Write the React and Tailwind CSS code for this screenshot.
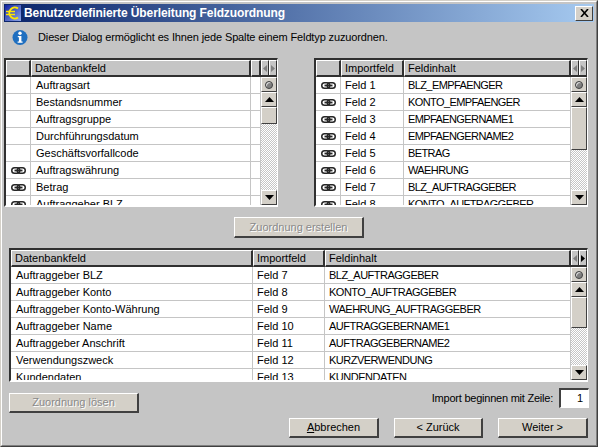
function Link() {
  return (
    <svg width="15" height="7" viewBox="0 0 15 7" fill="none" stroke="#262626" strokeWidth="1.5">
      <rect x="0.75" y="0.75" width="8" height="5.5" rx="2.75" />
      <rect x="6.25" y="0.75" width="8" height="5.5" rx="2.75" />
      <path d="M3.5 3.5h8" strokeWidth="1.8" />
    </svg>
  );
}

function Button({ w, h, disabled, children }) {
  return (
    <div className={"flex items-center justify-center bg-[#d4d0c8] border-t border-l border-t-white border-l-white border-r-2 border-b-2 border-r-[#404040] border-b-[#404040] shrink-0 " + w + " " + h + " " + (disabled ? "text-[#8a8a8a] [text-shadow:1px_1px_0_#fff]" : "text-black")}>
      {children}
    </div>
  );
}

function Tri({ dir, color = "#000" }) {
  const pts = { up: "0,5 9,5 4.5,0", down: "0,0 9,0 4.5,5", left: "5,0 5,7 1,3.5", right: "1,0 1,7 5,3.5" }[dir];
  const big = dir === "up" || dir === "down";
  return (
    <svg width={big ? 9 : 6} height={big ? 5 : 7} viewBox={big ? "0 0 9 5" : "0 0 6 7"}>
      <polygon points={pts} fill={color} />
    </svg>
  );
}

function HeadCell({ className = "", children }) {
  return (
    <div className={"h-[17px] flex items-center pl-[3px] bg-[#c5c5c5] border-t border-l border-t-white border-l-white border-r-2 border-b-2 border-r-[#303030] border-b-[#303030] overflow-hidden whitespace-nowrap shrink-0 " + className}>
      {children}
    </div>
  );
}

function Cell({ className = "", children }) {
  return (
    <div className={"h-full flex items-center border-r border-r-[#c5c5c5] overflow-hidden whitespace-nowrap shrink-0 " + className}>
      {children}
    </div>
  );
}

function ScrollBtn({ className = "", children }) {
  return (
    <div className={"w-[16px] flex items-center justify-center bg-[#d4d0c8] border-t border-l border-t-white border-l-white border-r border-b border-r-[#404040] border-b-[#404040] shrink-0 " + className}>
      {children}
    </div>
  );
}

function Scrollbar({ thumb, rightDark }) {
  return (
    <div className="w-[16px] shrink-0 flex flex-col h-full">
      <div className="h-[17px] flex shrink-0 bg-[#c5c5c5] border-b-2 border-b-[#303030]">
        <div className="w-[8px] flex items-center justify-center bg-[#c5c5c5] border-t border-l border-t-white border-l-white border-r border-r-[#303030]"><Tri dir="left" color="#808080" /></div>
        <div className="w-[8px] flex items-center justify-center bg-[#c5c5c5] border-t border-l border-t-white border-l-white border-r border-r-[#303030]"><Tri dir="right" color={rightDark ? "#000" : "#808080"} /></div>
      </div>
      <ScrollBtn className="h-[15px]">
        <div className="w-[8px] h-[8px] rounded-full bg-[#808080] border border-[#404040] shadow-[inset_1px_1px_0_#e8e8e8]" />
      </ScrollBtn>
      <ScrollBtn className="h-[15px]"><Tri dir="up" /></ScrollBtn>
      <ScrollBtn className={thumb} />
      <div className="flex-1 bg-[repeating-conic-gradient(#ffffff_0_25%,#c5c5c5_0_50%)] bg-[length:2px_2px]" />
      <ScrollBtn className="h-[15px]"><Tri dir="down" /></ScrollBtn>
    </div>
  );
}

function Grid({ className, headers, rows, thumb, rightDark }) {
  return (
    <div className={"border-t-2 border-l-2 border-t-[#303030] border-l-[#303030] border-r border-b-2 border-r-white border-b-white flex overflow-hidden bg-white shrink-0 " + className}>
      <div className="flex-1 min-w-0 flex flex-col">
        <div className="flex shrink-0">
          {headers.map((h, i) => <HeadCell key={i} className={h.w}>{h.t}</HeadCell>)}
        </div>
        <div className="flex-1 overflow-hidden">
          {rows.map((r, i) => (
            <div key={i} className="h-[17px] flex border-b border-b-[#c5c5c5]">
              {r.map((c, j) => (
                <Cell key={j} className={headers[j].w + " " + (c === "L" ? "justify-center" : headers[j].pl)}>
                  {c === "L" ? <Link /> : c}
                </Cell>
              ))}
            </div>
          ))}
        </div>
      </div>
      <Scrollbar thumb={thumb} rightDark={rightDark} />
    </div>
  );
}

const leftRows = [
  ["", "Auftragsart", ""],
  ["", "Bestandsnummer", ""],
  ["", "Auftragsgruppe", ""],
  ["", "Durchführungsdatum", ""],
  ["", "Geschäftsvorfallcode", ""],
  ["L", "Auftragswährung", ""],
  ["L", "Betrag", ""],
  ["L", "Auftraggeber BLZ", ""],
];
const rightRows = [
  ["L", "Feld 1", "BLZ_EMPFAENGER"],
  ["L", "Feld 2", "KONTO_EMPFAENGER"],
  ["L", "Feld 3", "EMPFAENGERNAME1"],
  ["L", "Feld 4", "EMPFAENGERNAME2"],
  ["L", "Feld 5", "BETRAG"],
  ["L", "Feld 6", "WAEHRUNG"],
  ["L", "Feld 7", "BLZ_AUFTRAGGEBER"],
  ["L", "Feld 8", "KONTO_AUFTRAGGEBER"],
];
const bottomRows = [
  ["Auftraggeber BLZ", "Feld 7", "BLZ_AUFTRAGGEBER"],
  ["Auftraggeber Konto", "Feld 8", "KONTO_AUFTRAGGEBER"],
  ["Auftraggeber Konto-Währung", "Feld 9", "WAEHRUNG_AUFTRAGGEBER"],
  ["Auftraggeber Name", "Feld 10", "AUFTRAGGEBERNAME1"],
  ["Auftraggeber Anschrift", "Feld 11", "AUFTRAGGEBERNAME2"],
  ["Verwendungszweck", "Feld 12", "KURZVERWENDUNG"],
  ["Kundendaten", "Feld 13", "KUNDENDATEN"],
];

export default function App() {
  return (
    <div className="w-[598px] h-[447px] overflow-hidden bg-[#c5c5c5] border border-t-[#d4d0c8] border-l-[#d4d0c8] border-r-[#404040] border-b-[#404040] font-['Liberation_Sans',Arial,sans-serif] text-[11px] leading-none text-black">
      <div className="h-full flex flex-col border border-t-white border-l-white border-r-[#808080] border-b-[#808080] p-[2px]">
        <div className="h-[18px] shrink-0 flex items-center bg-[linear-gradient(90deg,#0a246a,#a6caf0)] pl-[1px] pr-[1px]">
          <svg width="16" height="16" viewBox="0 0 16 16" className="shrink-0">
            <defs>
              <linearGradient id="eu" x1="0" y1="0" x2="1" y2="1">
                <stop offset="0" stopColor="#1020a0" />
                <stop offset="1" stopColor="#8fa8e8" />
              </linearGradient>
            </defs>
            <rect width="16" height="16" fill="url(#eu)" />
            <path d="M13 3.5A5.5 5.5 0 1 0 13 12.5" fill="none" stroke="#ffe600" strokeWidth="2" />
            <path d="M1 6.5h9M1 9.5h9" stroke="#ffe600" strokeWidth="1.4" />
          </svg>
          <span className="ml-[3px] pb-[1px] text-white font-bold text-[12px] tracking-[-0.1px] whitespace-nowrap flex-1">Benutzerdefinierte Überleitung Feldzuordnung</span>
          <div className="w-[18px] h-[15px] flex items-center justify-center bg-[#d4d0c8] border-t border-l border-t-white border-l-white border-r border-b border-r-[#404040] border-b-[#404040]">
            <svg width="9" height="8" viewBox="0 0 9 8" stroke="#000" strokeWidth="1.6"><path d="M1 0l7 8M8 0l-7 8" /></svg>
          </div>
        </div>

        <div className="h-[19px] mt-[6px] shrink-0 flex items-center pl-[8px]">
          <svg width="16" height="17" viewBox="0 0 16 17" className="shrink-0">
            <circle cx="8" cy="8.5" r="7.5" fill="#1f6fc0" />
            <circle cx="8" cy="4.3" r="1.7" fill="#fff" />
            <path d="M5.8 7h3.6v5.5h1.2v1.3H5.6v-1.3h1.3V8.3H5.8z" fill="#fff" />
          </svg>
          <span className="ml-[10px] pb-[1px] tracking-[-0.13px] whitespace-nowrap">Dieser Dialog ermöglicht es Ihnen jede Spalte einem Feldtyp zuzuordnen.</span>
        </div>

        <div className="flex mt-[11px] shrink-0">
          <Grid className="w-[274px] h-[149px]" thumb="h-[17px]"
            headers={[{ t: "", w: "w-[25px]", pl: "" }, { t: "Datenbankfeld", w: "w-[220px]", pl: "pl-[5px]" }, { t: "", w: "w-[10px]", pl: "" }]}
            rows={leftRows} />
          <div className="w-[36px] shrink-0" />
          <Grid className="w-[274px] h-[149px]" thumb="h-[43px]"
            headers={[{ t: "", w: "w-[25px]", pl: "" }, { t: "Importfeld", w: "w-[63px]", pl: "pl-[4px]" }, { t: "Feldinhalt", w: "w-[167px]", pl: "pl-[4px] tracking-[-0.6px]" }]}
            rows={rightRows} />
        </div>

        <div className="flex justify-center mt-[10px] shrink-0">
          <Button w="w-[130px]" h="h-[21px]" disabled>Zuordnung erstellen</Button>
        </div>

        <Grid className="ml-[5px] mt-[10px] w-[579px] h-[134px]" thumb="h-[31px]" rightDark
          headers={[{ t: "Datenbankfeld", w: "w-[242px]", pl: "pl-[5px]" }, { t: "Importfeld", w: "w-[72px]", pl: "pl-[4px]" }, { t: "Feldinhalt", w: "w-[246px]", pl: "pl-[4px] tracking-[-0.5px]" }]}
          rows={bottomRows} />

        <div className="flex-1 ml-[5px] mr-[5px] flex justify-between">
          <div className="mt-[11px]">
            <Button w="w-[130px]" h="h-[20px]" disabled>Zuordnung lösen</Button>
          </div>
          <div className="flex flex-col items-end mt-[6px]">
            <div className="flex items-center">
              <span className="mr-[6px] tracking-[-0.23px] whitespace-nowrap">Import beginnen mit Zeile:</span>
              <div className="w-[30px] h-[20px] bg-white border-t-2 border-l-2 border-t-[#404040] border-l-[#404040] border-r border-b border-r-white border-b-white flex items-center justify-end pr-[5px]">1</div>
            </div>
            <div className="flex mt-[10px] mr-[1px] gap-[15px]">
              <Button w="w-[90px]" h="h-[20px]"><span><u>A</u>bbrechen</span></Button>
              <Button w="w-[89px]" h="h-[20px]">&lt; Zurück</Button>
              <Button w="w-[90px]" h="h-[20px]">Weiter &gt;</Button>
            </div>
          </div>
        </div>
      </div>
    </div>
  );
}
